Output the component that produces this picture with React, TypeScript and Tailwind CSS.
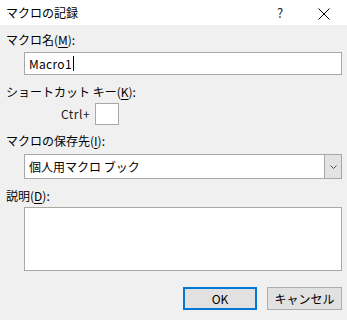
import React from "react";

const font = { fontFamily: '"Noto Sans CJK JP", "Noto Sans", sans-serif' };

function U({ children }: { children: React.ReactNode }) {
  return <span className="underline underline-offset-2 decoration-1">{children}</span>;
}

export default function App() {
  return (
    <div className="w-[347px] h-[320px] bg-[#f0f0f0] text-black text-[12px] leading-[16px] flex flex-col" style={font}>
      {/* Title bar */}
      <div className="h-[25px] bg-white flex items-center relative">
        <div className="pl-[6px]">マクロの記録</div>
        <div className="absolute left-[277px] top-[5px] text-[13px] leading-[16px] text-[#222]">?</div>
        <svg className="absolute left-[318px] top-[8px]" width="12" height="12" viewBox="0 0 12 12">
          <path d="M0.5 0.5 L11.5 11.5 M11.5 0.5 L0.5 11.5" stroke="#000" strokeWidth="1" />
        </svg>
      </div>

      <div className="flex flex-col pl-[6px] pr-[5px]">
        <div className="mt-[7px] h-[16px]">マクロ名(<U>M</U>):</div>
        <div className="mt-[4px] ml-[18px] h-[23px] bg-white border border-[#a8a8a8] flex items-center pl-[4px]">
          <span className="tracking-[0.3px]">Macro1</span>
          <span className="inline-block w-[1px] h-[15px] bg-black ml-[1px]"></span>
        </div>

        <div className="mt-[9px] h-[16px]">ショートカット キー(<U>K</U>):</div>
        <div className="mt-[3px] flex items-center h-[22px]">
          <span className="ml-[55px] w-[30px] tracking-[0.5px] text-[#1a1a1a]">Ctrl+</span>
          <div className="ml-[4px] w-[24px] h-[22px] bg-white border border-[#a8a8a8]"></div>
        </div>

        <div className="mt-[8px] h-[16px]">マクロの保存先(<U>I</U>):</div>
        <div className="mt-[5px] ml-[18px] h-[25px] bg-white border border-[#a8a8a8] flex items-stretch">
          <div className="flex-1 flex items-center pl-[4px]">個人用マクロ ブック</div>
          <div className="w-[17px] bg-[#e3e3e3] border-l border-[#a8a8a8] flex items-center justify-center">
            <svg width="7" height="4" viewBox="0 0 7 4">
              <path d="M0.5 0.5 L3.5 3.5 L6.5 0.5" stroke="#555" strokeWidth="1" fill="none" />
            </svg>
          </div>
        </div>

        <div className="mt-[9px] h-[16px]">説明(<U>D</U>):</div>
        <div className="mt-[3px] ml-[18px] h-[64px] bg-white border border-[#a8a8a8]"></div>

        <div className="mt-[16px] flex justify-end gap-[10px]">
          <button className="w-[74px] h-[23px] bg-[#e1e1e1] border-2 border-[#0078d7] flex items-center justify-center">OK</button>
          <button className="w-[75px] h-[23px] bg-[#e1e1e1] border border-[#adadad] flex items-center justify-center">キャンセル</button>
        </div>
      </div>
    </div>
  );
}
